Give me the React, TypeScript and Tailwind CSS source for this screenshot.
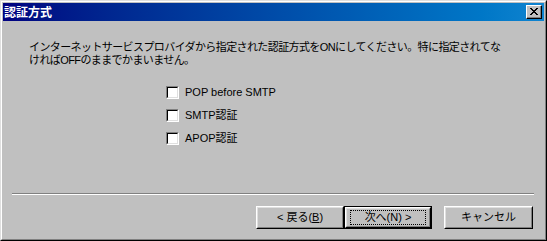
import React from "react";

const jp = { fontFamily: '"Liberation Sans", "Noto Sans CJK JP", sans-serif' };

function Check({ label }: { label: string }) {
  return (
    <div className="flex h-[23px] items-center">
      <div className="h-[13px] w-[13px] border-t border-l border-t-[#808080] border-l-[#808080] border-r border-b border-r-white border-b-white">
        <div className="h-full w-full bg-white border-t border-l border-t-black border-l-black border-r border-b border-r-[#dfdfdf] border-b-[#dfdfdf]" />
      </div>
      <span className="ml-[6px] text-[11px] leading-[13px] text-black">{label}</span>
    </div>
  );
}

function Btn({ children, def, w }: { children: React.ReactNode; def?: boolean; w: string }) {
  const inner = (
    <div className="h-full w-full border-t border-l border-t-white border-l-white border-r border-b border-r-black border-b-black">
      <div className="h-full w-full border-t border-l border-t-[#dfdfdf] border-l-[#dfdfdf] border-r border-b border-r-[#808080] border-b-[#808080] flex items-center justify-center">
        {def ? (
          <div className="flex h-[15px] w-[calc(100%-6px)] items-center justify-center border border-dotted border-black">
            {children}
          </div>
        ) : (
          children
        )}
      </div>
    </div>
  );
  return (
    <div className={`h-[23px] ${w} ${def ? "border border-black" : ""} text-[11px] leading-[13px] text-black`}>
      {inner}
    </div>
  );
}

export default function App() {
  return (
    <div className="w-[547px] h-[241px] bg-[#c0c0c0]" style={jp}>
      <div className="h-full w-full border-t border-l border-t-[#dfdfdf] border-l-[#dfdfdf] border-r border-b border-r-black border-b-black">
        <div className="h-full w-full border-t border-l border-t-white border-l-white border-r border-b border-r-[#808080] border-b-[#808080] p-[1px] flex flex-col">
          <div className="h-[18px] flex items-center justify-between bg-gradient-to-r from-[#000080] to-[#1084d0]">
            <span className="pl-[1px] text-[12px] font-bold leading-[14px] text-white" style={{ fontFamily: '"Noto Sans CJK JP", sans-serif' }}>
              認証方式
            </span>
            <div className="mr-[2px] h-[14px] w-[16px] border-t border-l border-t-white border-l-white border-r border-b border-r-black border-b-black bg-[#c0c0c0]">
              <div className="h-full w-full border-r border-b border-r-[#808080] border-b-[#808080] flex items-center justify-center">
                <svg width="8" height="7" viewBox="0 0 8 7" shapeRendering="crispEdges">
                  <path d="M0 0h2v1H0zM6 0h2v1H6zM1 1h2v1H1zM5 1h2v1H5zM2 2h4v1H2zM3 3h2v1H3zM2 4h4v1H2zM1 5h2v1H1zM5 5h2v1H5zM0 6h2v1H0zM6 6h2v1H6z" fill="#000" />
                </svg>
              </div>
            </div>
          </div>
          <div className="flex-1 flex flex-col">
            <p className="pt-[20px] pl-[26px] text-[11px] leading-[13px] text-black whitespace-nowrap tracking-[-0.6px]">
              インターネットサービスプロバイダから指定された認証方式をONにしてください。特に指定されてな
              <br />
              ければOFFのままでかまいません。
            </p>
            <div className="mt-[14px] pl-[163px] flex flex-col">
              <Check label="POP before SMTP" />
              <Check label="SMTP認証" />
              <Check label="APOP認証" />
            </div>
            <div className="mt-[43px] ml-[9px] mr-[10px] border-t border-t-[#808080] border-b border-b-white" />
            <div className="mt-[11px] flex pl-[253px]">
              <Btn w="w-[88px]">
                <span>&lt; 戻る(<u>B</u>)</span>
              </Btn>
              <Btn w="w-[88px]" def>
                <span>次へ(N) &gt;</span>
              </Btn>
              <div className="w-[12px]" />
              <Btn w="w-[89px]">
                <span>キャンセル</span>
              </Btn>
            </div>
          </div>
        </div>
      </div>
    </div>
  );
}
